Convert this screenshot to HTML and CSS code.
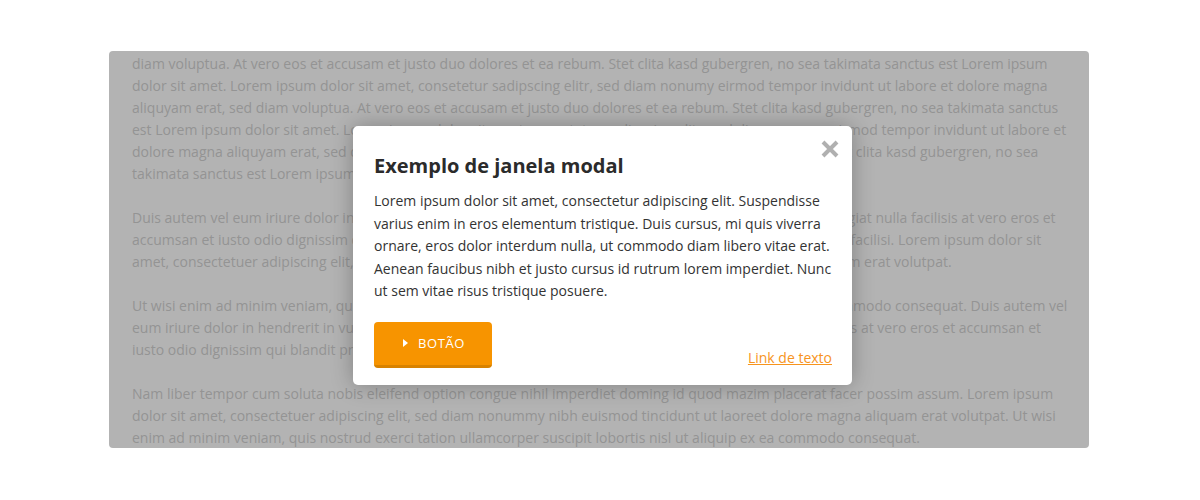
FILE: index.html
```html
<!DOCTYPE html>
<html lang="pt">
<head>
<meta charset="utf-8">
<title>Exemplo de janela modal</title>
<link rel="stylesheet" href="styles.css">
</head>
<body>
<div class="page">
  <div class="backdrop">
    <p>diam voluptua. At vero eos et accusam et justo duo dolores et ea rebum. Stet clita kasd gubergren, no sea takimata sanctus est Lorem ipsum dolor sit amet. Lorem ipsum dolor sit amet, consetetur sadipscing elitr, sed diam nonumy eirmod tempor invidunt ut labore et dolore magna aliquyam erat, sed diam voluptua. At vero eos et accusam et justo duo dolores et ea rebum. Stet clita kasd gubergren, no sea takimata sanctus est Lorem ipsum dolor sit amet. Lorem ipsum dolor sit amet, consetetur sadipscing elitr, sed diam nonumy eirmod tempor invidunt ut labore et dolore magna aliquyam erat, sed diam voluptua. At vero eos et accusam et justo duo dolores et ea rebum. Stet clita kasd gubergren, no sea takimata sanctus est Lorem ipsum dolor sit amet.</p>
    <p>Duis autem vel eum iriure dolor in hendrerit in vulputate velit esse molestie consequat, vel illum dolore eu feugiat nulla facilisis at vero eros et accumsan et iusto odio dignissim qui blandit praesent luptatum zzril delenit augue duis dolore te feugait nulla facilisi. Lorem ipsum dolor sit amet, consectetuer adipiscing elit, sed diam nonummy nibh euismod tincidunt ut laoreet dolore magna aliquam erat volutpat.</p>
    <p>Ut wisi enim ad minim veniam, quis nostrud exerci tation ullamcorper suscipit lobortis nisl ut aliquip ex ea commodo consequat. Duis autem vel eum iriure dolor in hendrerit in vulputate velit esse molestie consequat, vel illum dolore eu feugiat nulla facilisis at vero eros et accumsan et iusto odio dignissim qui blandit praesent luptatum zzril delenit augue duis dolore te feugait nulla facilisi.</p>
    <p>Nam liber tempor cum soluta nobis eleifend option congue nihil imperdiet doming id quod mazim placerat facer possim assum. Lorem ipsum dolor sit amet, consectetuer adipiscing elit, sed diam nonummy nibh euismod tincidunt ut laoreet dolore magna aliquam erat volutpat. Ut wisi enim ad minim veniam, quis nostrud exerci tation ullamcorper suscipit lobortis nisl ut aliquip ex ea commodo consequat.</p>
  </div>

  <div class="modal" role="dialog" aria-labelledby="modal-title">
    <button class="modal-close" aria-label="Fechar">
      <svg width="18" height="18" viewBox="0 0 18 18" aria-hidden="true">
        <path d="M2 2 L16 16 M16 2 L2 16" stroke="currentColor" stroke-width="4" stroke-linecap="butt"/>
      </svg>
    </button>
    <h2 class="modal-title" id="modal-title">Exemplo de janela modal</h2>
    <p class="modal-text">Lorem ipsum dolor sit amet, consectetur adipiscing elit. Suspendisse varius enim in eros elementum tristique. Duis cursus, mi quis viverra ornare, eros dolor interdum nulla, ut commodo diam libero vitae erat. Aenean faucibus nibh et justo cursus id rutrum lorem imperdiet. Nunc ut sem vitae risus tristique posuere.</p>
    <div class="modal-actions">
      <a class="btn" href="#"><span class="btn-arrow"></span>BOTÃO</a>
      <a class="text-link" href="#">Link de texto</a>
    </div>
  </div>
</div>
</body>
</html>
```

FILE: styles.css
```css
* { box-sizing: border-box; }

html, body {
  margin: 0;
  padding: 0;
  background: #ffffff;
}

body {
  font-family: "Open Sans", "Liberation Sans", sans-serif;
}

.page {
  position: relative;
  width: 1200px;
  height: 500px;
  padding-top: 51px;
}

.backdrop {
  margin-left: 109px;
  width: 980px;
  height: 397px;
  background: #b3b3b3;
  border-radius: 4px;
  overflow: hidden;
  padding: 2px 19px 0 23px;
  color: #949494;
  font-size: 14px;
  line-height: 22px;
}

.backdrop p {
  margin: 0 0 22px;
}

.modal {
  position: absolute;
  left: 353px;
  top: 126px;
  width: 499px;
  background: #ffffff;
  border-radius: 5px;
  box-shadow: 0 0 22px rgba(0, 0, 0, 0.28);
  padding: 26px 20px 17px 21px;
  color: #333333;
}

.modal-close {
  position: absolute;
  top: 14px;
  right: 13px;
  width: 18px;
  height: 18px;
  padding: 0;
  border: 0;
  background: none;
  color: #b0b0b0;
  cursor: pointer;
  display: flex;
}

.modal-title {
  margin: 0;
  font-size: 20px;
  line-height: 28px;
  font-weight: 700;
  color: #2b2b2b;
}

.modal-text {
  margin: 10px 0 0;
  font-size: 14px;
  line-height: 22.5px;
}

.modal-actions {
  margin-top: 19px;
  display: flex;
  justify-content: space-between;
  align-items: flex-end;
}

.btn {
  display: flex;
  align-items: center;
  width: 118px;
  height: 46px;
  padding: 0 0 0 29px;
  background: #f79400;
  border-bottom: 3px solid #d88200;
  border-radius: 4px;
  color: #ffffff;
  text-decoration: none;
  font-size: 13px;
  letter-spacing: 0.6px;
}

.btn-arrow {
  width: 0;
  height: 0;
  border-top: 4px solid transparent;
  border-bottom: 4px solid transparent;
  border-left: 5px solid #ffffff;
  margin-right: 10px;
}

.text-link {
  color: #f7941d;
  font-size: 14px;
  line-height: 20px;
  text-decoration: underline;
}
```
